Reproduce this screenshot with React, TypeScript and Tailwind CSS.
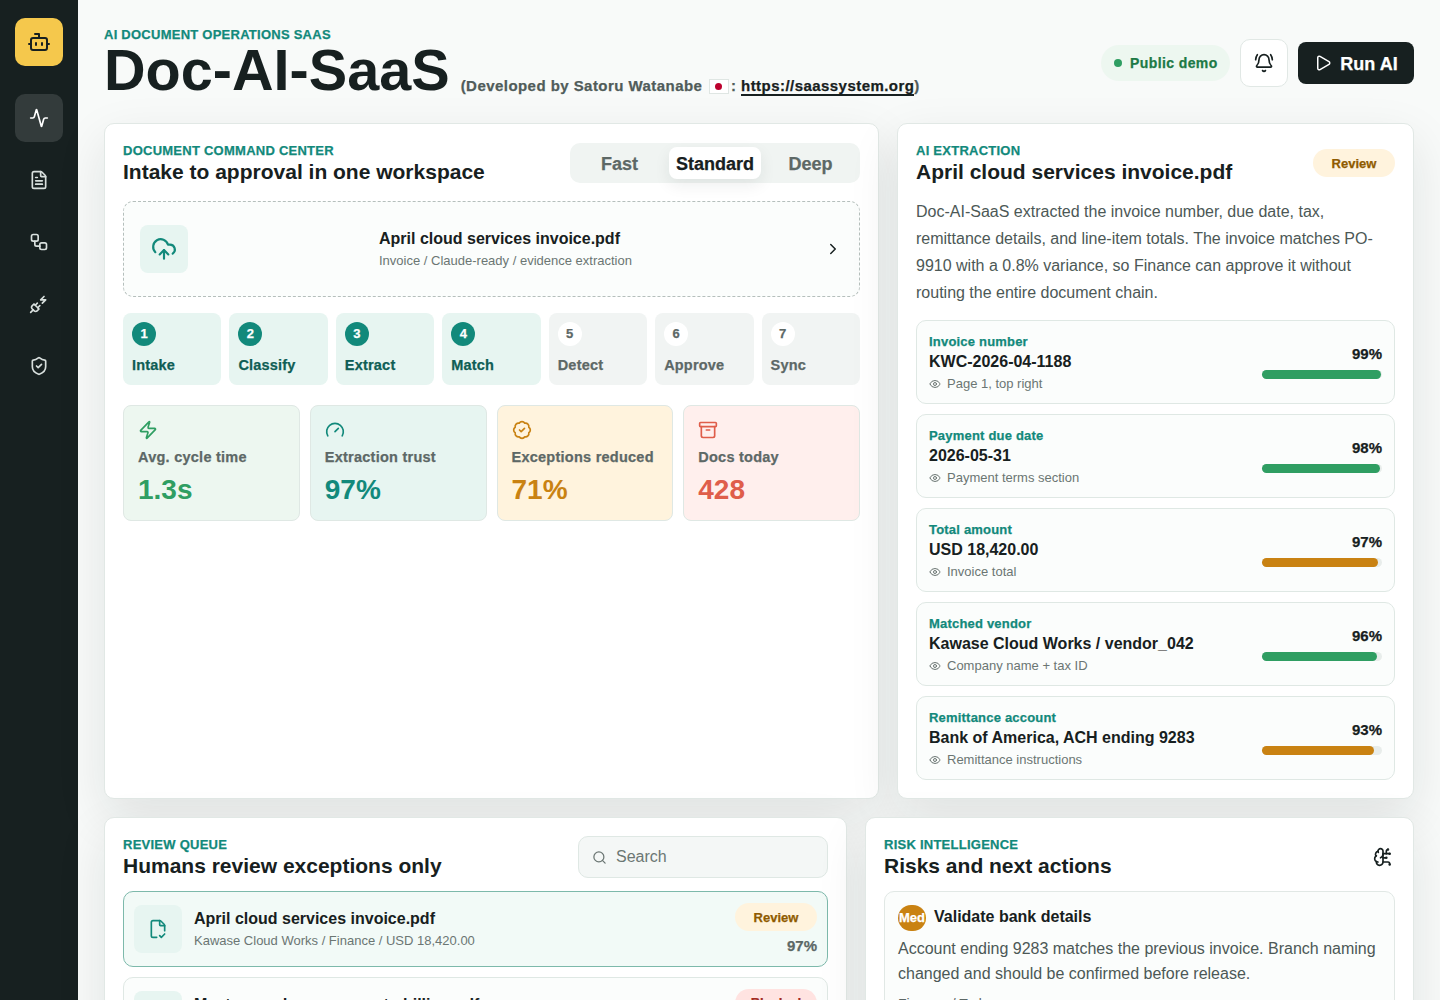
import React from "react";
import { Bot, Activity, FileText, Workflow, PlugZap, ShieldCheck, BellRing, Play, CloudUpload, ChevronRight, Zap, Gauge, BadgeCheck, Archive, Eye, Search, FileCheck2, BrainCircuit } from "lucide-react";

const steps = [
  ["1", "Intake", true], ["2", "Classify", true], ["3", "Extract", true], ["4", "Match", true],
  ["5", "Detect", false], ["6", "Approve", false], ["7", "Sync", false],
] as const;

const fields = [
  { l: "Invoice number", v: "KWC-2026-04-1188", s: "Page 1, top right", p: 99, c: "bg-[#2f9e62]" },
  { l: "Payment due date", v: "2026-05-31", s: "Payment terms section", p: 98, c: "bg-[#2f9e62]" },
  { l: "Total amount", v: "USD 18,420.00", s: "Invoice total", p: 97, c: "bg-[#c98212]" },
  { l: "Matched vendor", v: "Kawase Cloud Works / vendor_042", s: "Company name + tax ID", p: 96, c: "bg-[#2f9e62]" },
  { l: "Remittance account", v: "Bank of America, ACH ending 9283", s: "Remittance instructions", p: 93, c: "bg-[#c98212]" },
];

const heavy = "font-black [-webkit-text-stroke:0.25px_currentColor]";

function Eyebrow({ children }: { children: React.ReactNode }) {
  return <div className={`text-[13px] leading-[14px] tracking-[0.25px] uppercase text-[#12897b] ${heavy}`}>{children}</div>;
}
function Title({ children }: { children: React.ReactNode }) {
  return <h2 className="text-[21px] leading-[28px] font-bold text-[#172020]">{children}</h2>;
}

const card = "rounded-[10px] border border-[#e1e8e5] bg-white shadow-[0_18px_50px_rgba(23,32,32,0.10)]";

export default function App() {
  return (
    <div className="flex h-screen overflow-hidden bg-[#f8faf9] font-['Arial','Liberation_Sans',sans-serif] text-[#172020]">
      <aside className="flex w-[78px] shrink-0 flex-col items-center bg-[#172020] pt-[18px]">
        <div className="flex h-12 w-12 items-center justify-center rounded-[10px] bg-[#f5c84c] text-[#172020]"><Bot size={24} /></div>
        <nav className="mt-7 flex flex-col gap-[14px] text-[#d8dfdd]">
          <div className="flex h-12 w-12 items-center justify-center rounded-[10px] bg-[#333b3b] text-white"><Activity size={20} /></div>
          <div className="flex h-12 w-12 items-center justify-center"><FileText size={20} /></div>
          <div className="flex h-12 w-12 items-center justify-center"><Workflow size={20} /></div>
          <div className="flex h-12 w-12 items-center justify-center"><PlugZap size={20} /></div>
          <div className="flex h-12 w-12 items-center justify-center"><ShieldCheck size={20} /></div>
        </nav>
      </aside>
      <main className="min-w-0 flex-1 px-[26px] pt-[24px]">
        <header className="flex h-[81px] items-start justify-between">
          <div className="mt-[4px] min-w-0">
            <Eyebrow>AI Document Operations SaaS</Eyebrow>
            <h1 className="mt-[3px] text-[57.6px] leading-[50px] font-bold text-[#172020]">Doc-AI-SaaS<span className={`ml-[11px] align-[-1px] text-[15px] leading-none tracking-[0.45px] text-[#505c5a] ${heavy}`}>(Developed by Satoru Watanabe <span className="mx-[2px] inline-flex h-[15px] w-5 items-center justify-center border border-[#dfe6e3] bg-white align-[1px]"><span className="h-[7px] w-[7px] rounded-full bg-[#bc002d]" /></span>: <a className="border-b-2 border-[#172020] text-[#172020]">https://saassystem.org</a>)</span></h1>
          </div>
          <div className="flex items-center gap-[10px] pt-[15px]">
            <div className={`flex h-9 w-[129px] items-center gap-2 rounded-full bg-[#edf7f0] pl-[13px] text-[14px] tracking-[0.4px] text-[#1d7a46] ${heavy}`}><span className="h-2 w-2 rounded-full bg-[#2f9e62]" />Public demo</div>
            <button className="flex h-12 w-12 items-center justify-center rounded-[10px] border border-[#e1e8e5] bg-white"><BellRing size={20} /></button>
            <button className={`flex h-[42px] w-[116px] items-center justify-center gap-2 rounded-[8px] bg-[#172020] text-[18px] text-white ${heavy}`}><Play size={18} /><span className="pt-[2px]">Run AI</span></button>
          </div>
        </header>

        <section className="mt-[18px] grid grid-cols-[775px_517px] gap-[18px]">
          <div className={`${card} h-[676px] p-[18px]`}>
            <div className="flex items-start justify-between">
              <div className="pt-[2px]"><Eyebrow>Document command center</Eyebrow><Title>Intake to approval in one workspace</Title></div>
              <div className={`mt-[1px] flex h-10 w-[290px] items-center justify-center rounded-[10px] bg-[#f0f4f2] text-[18px] text-[#5d6866] ${heavy}`}>
                <span className="w-[99px] pt-[2px] text-center">Fast</span>
                <span className="flex h-8 w-[92px] items-center justify-center rounded-[8px] bg-white pt-[2px] text-[#172020] shadow-[0_6px_16px_rgba(23,32,32,0.08)]">Standard</span>
                <span className="w-[99px] pt-[2px] text-center">Deep</span>
              </div>
            </div>
            <div className="mt-[15px] flex h-24 items-center rounded-[10px] border border-dashed border-[#b5bfbc] bg-[#fbfdfc] pl-4 pr-[17px]">
              <div className="flex h-12 w-12 shrink-0 items-center justify-center rounded-[8px] bg-[#e7f5f1] text-[#12897b]"><CloudUpload size={26} /></div>
              <div className="flex-1 pl-[191px]">
                <div className="text-[16px] leading-[20px] font-bold">April cloud services invoice.pdf</div>
                <div className="mt-[4px] text-[13px] leading-[16px] text-[#6b7673]">Invoice / Claude-ready / evidence extraction</div>
              </div>
              <ChevronRight size={18} />
            </div>
            <div className="mt-4 grid grid-cols-7 gap-2">
              {steps.map(([n, t, on]) => (
                <div key={n} className={`h-[72px] rounded-[8px] p-[9px] ${on ? "bg-[#e7f5f1] text-[#0f5e55]" : "bg-[#f1f4f3] text-[#5d6866]"}`}>
                  <div className={`flex h-6 w-6 items-center justify-center rounded-full text-[13px] ${heavy} ${on ? "bg-[#12897b] text-white" : "bg-white"}`}>{n}</div>
                  <div className={`mt-[10px] text-[14.5px] leading-[18px] tracking-[0.2px] ${heavy}`}>{t}</div>
                </div>
              ))}
            </div>
            <div className="mt-5 grid grid-cols-4 gap-[10px]">
              {[
                { I: Zap, l: "Avg. cycle time", v: "1.3s", bg: "bg-[#edf7f0]", c: "text-[#2f9e62]" },
                { I: Gauge, l: "Extraction trust", v: "97%", bg: "bg-[#e7f5f1]", c: "text-[#12897b]" },
                { I: BadgeCheck, l: "Exceptions reduced", v: "71%", bg: "bg-[#fff3dd]", c: "text-[#c98212]" },
                { I: Archive, l: "Docs today", v: "428", bg: "bg-[#ffefed]", c: "text-[#df5d4a]" },
              ].map(({ I, l, v, bg, c }) => (
                <div key={l} className={`h-[116px] rounded-[8px] border border-[#dfe8e4] p-[14px] ${bg}`}>
                  <I size={20} className={c} />
                  <div className={`mt-[8px] text-[14.5px] leading-[18px] tracking-[0.25px] text-[#5d6866] ${heavy}`}>{l}</div>
                  <div className={`mt-[7px] text-[28px] leading-[34px] font-bold ${c}`}>{v}</div>
                </div>
              ))}
            </div>
          </div>

          <div className={`${card} h-[676px] p-[18px]`}>
            <div className="flex items-start justify-between">
              <div className="pt-[2px]"><Eyebrow>AI extraction</Eyebrow><Title>April cloud services invoice.pdf</Title></div>
              <span className={`mt-[7px] flex h-7 w-[82px] items-center justify-center rounded-full bg-[#fff3dd] pt-[1px] text-[13px] text-[#8f5b00] ${heavy}`}>Review</span>
            </div>
            <p className="mt-[12px] text-[16px] leading-[27px] text-[#4c5856]">Doc-AI-SaaS extracted the invoice number, due date, tax, remittance details, and line-item totals. The invoice matches PO-9910 with a 0.8% variance, so Finance can approve it without routing the entire document chain.</p>
            <div className="mt-[14px] flex flex-col gap-[10px]">
              {fields.map((f) => (
                <div key={f.l} className="flex h-[84px] items-center justify-between rounded-[10px] border border-[#dfe8e4] bg-[#fbfdfc] pl-3 pr-3">
                  <div className="pt-[3px]">
                    <div className={`text-[13px] leading-[16px] tracking-[0.2px] text-[#12897b] ${heavy}`}>{f.l}</div>
                    <div className="mt-[2px] text-[16px] leading-[20px] font-bold">{f.v}</div>
                    <div className="mt-[2px] flex items-center gap-[6px] text-[13px] leading-[20px] text-[#6b7673]"><Eye size={12} />{f.s}</div>
                  </div>
                  <div className="w-[120px] text-right">
                    <div className={`text-[15px] leading-[18px] ${heavy}`}>{f.p}%</div>
                    <div className="mt-[7px] h-[9px] rounded-full bg-[#e8edeb]"><div className={`h-full rounded-full ${f.c}`} style={{ width: `${f.p}%` }} /></div>
                  </div>
                </div>
              ))}
            </div>
          </div>
        </section>

        <section className="mt-[18px] grid grid-cols-[743px_549px] gap-[18px]">
          <div className={`${card} h-[400px] p-[18px]`}>
            <div className="flex items-start justify-between">
              <div className="pt-[2px]"><Eyebrow>Review queue</Eyebrow><Title>Humans review exceptions only</Title></div>
              <div className="flex h-[42px] w-[250px] items-center gap-[9px] rounded-[10px] border border-[#dfe8e4] bg-[#f4f7f6] px-[13px] text-[16px] text-[#6b7673]"><Search size={15} />Search</div>
            </div>
            <div className="mt-[11px] flex h-[76px] items-start rounded-[10px] border border-[#7db9ab] bg-[#f2faf7] px-[10px] pt-[13px]">
              <div className="flex h-12 w-12 items-center justify-center rounded-[8px] bg-[#e7f5f1] text-[#12897b]"><FileCheck2 size={20} /></div>
              <div className="ml-3 flex-1">
                <div className="mt-[4px] text-[16px] leading-[20px] font-bold">April cloud services invoice.pdf</div>
                <div className="mt-[3px] text-[13px] leading-[18px] text-[#6b7673]">Kawase Cloud Works / Finance / USD 18,420.00</div>
              </div>
              <div className="-mt-[2px] flex flex-col items-end gap-[6px]">
                <span className={`flex h-7 w-[82px] items-center justify-center rounded-full bg-[#fff3dd] pt-[1px] text-[13px] text-[#8f5b00] ${heavy}`}>Review</span>
                <span className={`text-[15px] leading-[18px] text-[#5d6866] ${heavy}`}>97%</span>
              </div>
            </div>
            <div className="mt-[10px] flex h-[76px] items-start rounded-[10px] border border-[#dfe8e4] bg-[#fbfdfc] px-[10px] pt-[13px]">
              <div className="flex h-12 w-12 items-center justify-center rounded-[8px] bg-[#e7f5f1]" />
              <div className="ml-3 mt-[4px] flex-1 text-[16px] leading-[20px] font-bold">Master vendor agreement - billing.pdf</div>
              <span className={`-mt-[2px] flex h-7 w-[82px] items-center justify-center rounded-full bg-[#ffe3e1] text-[13px] text-[#a32b22] ${heavy}`}>Blocked</span>
            </div>
          </div>
          <div className={`${card} h-[400px] p-[18px]`}>
            <div className="flex items-start justify-between">
              <div className="pt-[2px]"><Eyebrow>Risk intelligence</Eyebrow><Title>Risks and next actions</Title></div>
              <BrainCircuit size={20} className="mt-[11px] mr-[2px]" />
            </div>
            <div className="mt-[11px] rounded-[10px] border border-[#e1e8e5] bg-[#fbfdfc] p-[13px]">
              <div className="flex items-center gap-2">
                <span className={`flex h-[26px] w-[28px] items-center justify-center overflow-hidden rounded-full bg-[#c98212] text-[13px] text-white ${heavy}`}>Med</span>
                <span className="pb-[2px] text-[16px] leading-[24px] font-bold">Validate bank details</span>
              </div>
              <p className="mt-[5px] text-[16px] leading-[25px] text-[#4c5856]">Account ending 9283 matches the previous invoice. Branch naming changed and should be confirmed before release.</p>
              <div className="mt-2 text-[14px] text-[#5d6866]">Finance / Today</div>
            </div>
          </div>
        </section>
      </main>
    </div>
  );
}
